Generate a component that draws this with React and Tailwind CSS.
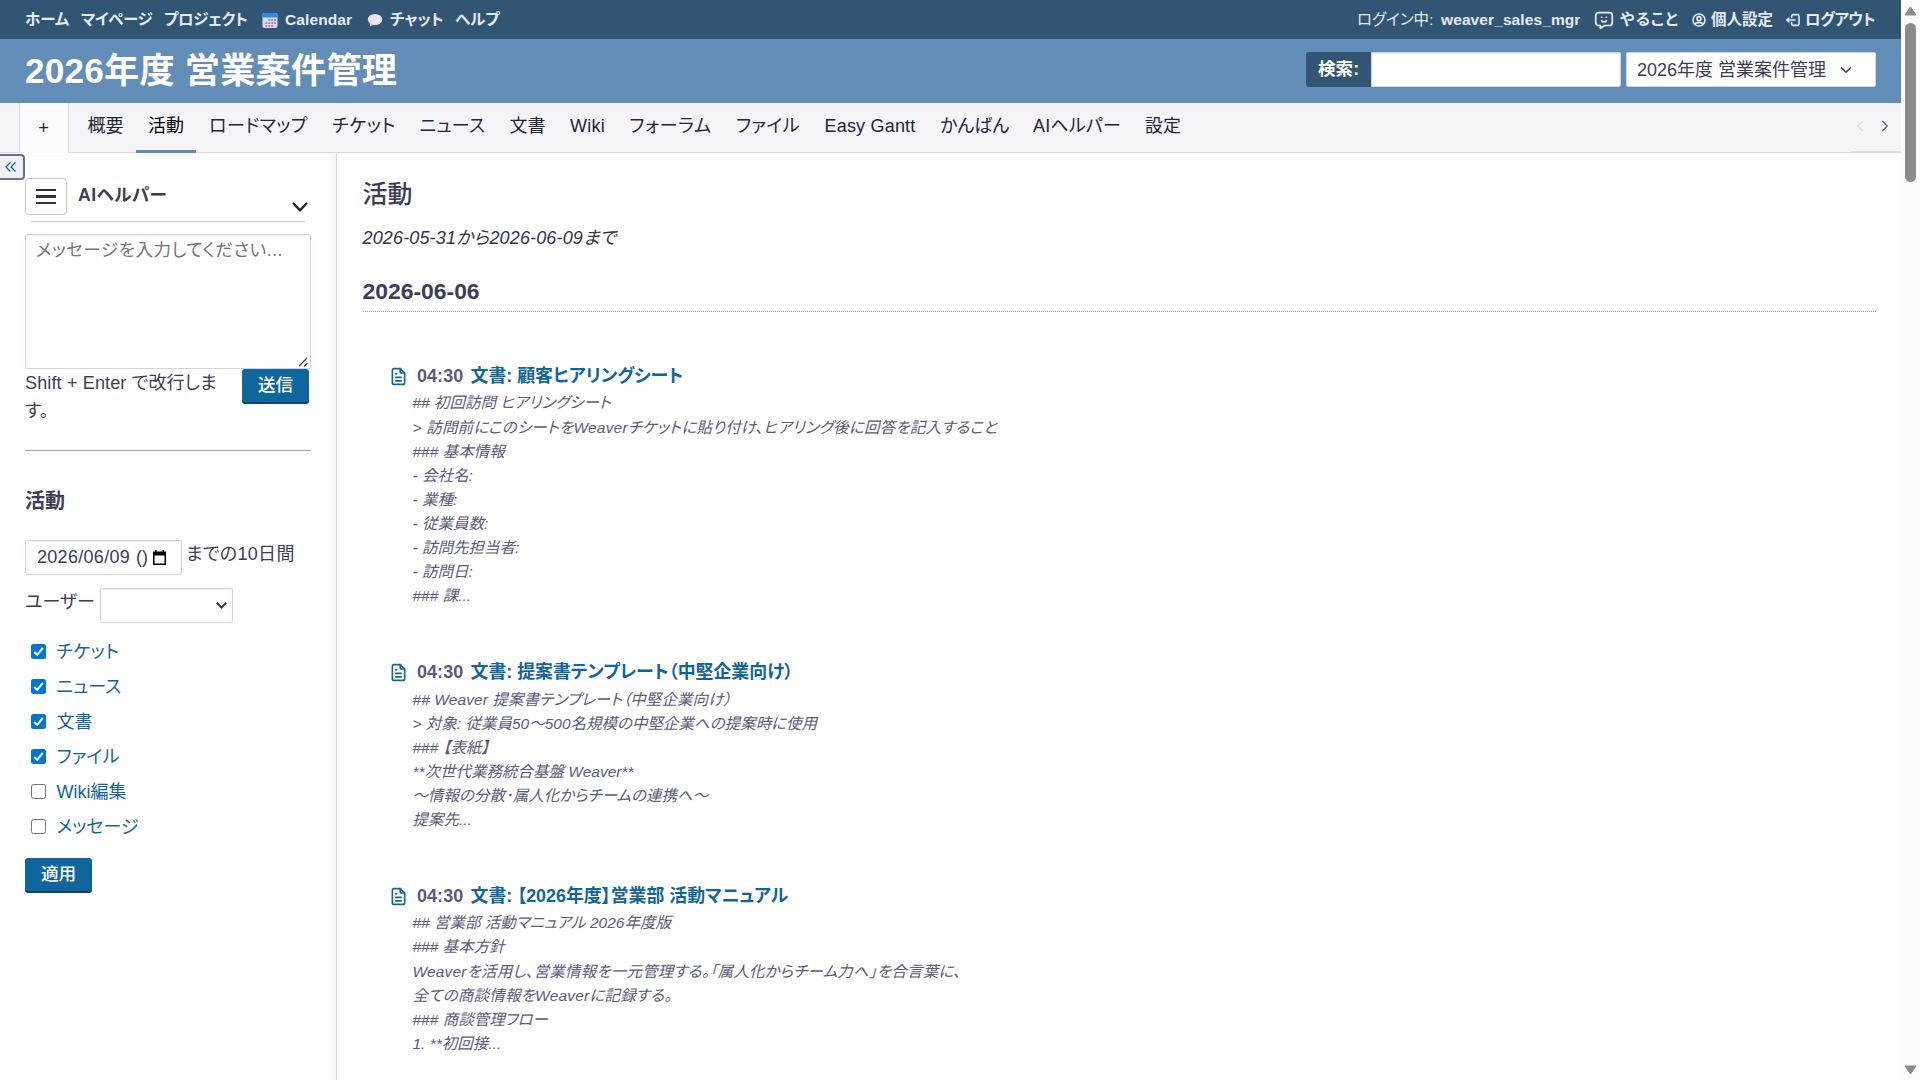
import {
  TbChevronDown,
  TbChevronLeft,
  TbChevronRight,
  TbChevronsLeft,
  TbFileText,
  TbLogout2,
  TbMessageChatbot,
  TbUserCircle,
} from "react-icons/tb";

const tabs = [
  { label: "概要", width: "w-[60px] pr-px" },
  { label: "活動", width: "w-[60px]", active: true },
  { label: "ロードマップ", width: "w-[124px] pl-px", tracking: "tracking-[0.4px]" },
  { label: "チケット", width: "w-[88px]", tracking: "tracking-[0.6px]" },
  { label: "ニュース", width: "w-[89px]", tracking: "tracking-[0.3px]" },
  { label: "文書", width: "w-[61px]" },
  { label: "Wiki", width: "w-[59px]", tracking: "tracking-[0.2px]" },
  { label: "フォーラム", width: "w-[107px]", tracking: "tracking-[0.7px]" },
  { label: "ファイル", width: "w-[88px]", tracking: "tracking-[0.4px]" },
  { label: "Easy Gantt", width: "w-[116px]", tracking: "tracking-[0.2px]" },
  { label: "かんばん", width: "w-[93px]" },
  { label: "AIヘルパー", width: "w-[112px]", tracking: "tracking-[0.2px]" },
  { label: "設定", width: "w-[60px]" },
];

const filters = [
  { label: "チケット", checked: true, tracking: "tracking-[0.4px]" },
  { label: "ニュース", checked: true, tracking: "tracking-normal" },
  { label: "文書", checked: true, tracking: "tracking-normal" },
  { label: "ファイル", checked: true, tracking: "tracking-[0.2px]" },
  { label: "Wiki編集", checked: false, tracking: "tracking-normal" },
  { label: "メッセージ", checked: false, tracking: "tracking-normal" },
];

const activities = [
  {
    time: "04:30",
    title: "文書: 顧客ヒアリングシート",
    lines: [
      { text: "## 初回訪問 ヒアリングシート" },
      {
        text: "> 訪問前にこのシートをWeaverチケットに貼り付け、ヒアリング後に回答を記入すること",
        className: "pt-px tracking-[0.19px]",
      },
      { text: "### 基本情報" },
      { text: "- 会社名:" },
      { text: "- 業種:" },
      { text: "- 従業員数:" },
      { text: "- 訪問先担当者:" },
      { text: "- 訪問日:" },
      { text: "### 課..." },
    ],
  },
  {
    time: "04:30",
    title: "文書: 提案書テンプレート（中堅企業向け）",
    lines: [
      { text: "## Weaver 提案書テンプレート（中堅企業向け）", className: "pt-px tracking-[0.1px]" },
      { text: "> 対象: 従業員50～500名規模の中堅企業への提案時に使用" },
      { text: "### 【表紙】" },
      { text: "**次世代業務統合基盤 Weaver**" },
      { text: "～情報の分散･属人化からチームの連携へ～" },
      { text: "提案先..." },
    ],
  },
  {
    time: "04:30",
    title: "文書: 【2026年度】営業部 活動マニュアル",
    lines: [
      { text: "## 営業部 活動マニュアル 2026年度版" },
      { text: "### 基本方針" },
      {
        text: "Weaverを活用し、営業情報を一元管理する。「属人化からチーム力へ」を合言葉に、",
        className: "pt-px tracking-[0.17px]",
      },
      {
        text: "全ての商談情報をWeaverに記録する。",
        className: "tracking-[0.2px]",
      },
      { text: "### 商談管理フロー" },
      { text: "1. **初回接..." },
    ],
  },
];

function CalendarIcon() {
  return (
    <svg width="16" height="16" viewBox="0 0 16 16">
      <rect x="0.5" y="1" width="15" height="15" rx="2" fill="#e3d9ee" />
      <path d="M0.5 5.5V3a2 2 0 0 1 2-2h11a2 2 0 0 1 2 2v2.500z" fill="#2f86f0" />
      <g fill="#9a8fb4">
        <rect x="6.300" y="7" width="2" height="2" />
        <rect x="9.200" y="7" width="2" height="2" />
        <rect x="12" y="7" width="2" height="2" />
        <rect x="3.300" y="10" width="2" height="2" />
        <rect x="6.300" y="10" width="2" height="2" />
        <rect x="9.200" y="10" width="2" height="2" />
        <rect x="12" y="10" width="2" height="2" />
        <rect x="3.300" y="13" width="2" height="2" />
        <rect x="6.300" y="13" width="2" height="2" />
        <rect x="9.200" y="13" width="2" height="2" />
      </g>
    </svg>
  );
}

function BubbleIcon() {
  return (
    <svg width="16" height="16" viewBox="0 0 16 16">
      <ellipse cx="8" cy="7.500" rx="7.200" ry="5.500" fill="#ece4f4" />
      <path d="M3 10.500L2.800 14.500L7.500 12.500z" fill="#d6c8e6" />
    </svg>
  );
}

function TopBar() {
  return (
    <div className="flex h-[39px] shrink-0 items-center justify-between bg-[#325574] pr-[25px] pl-[25px] text-[15.5px] font-semibold text-[#e3ecf5]">
      <div className="flex items-center">
        <span className="w-[56px]">ホーム</span>
        <span className="w-[83px] tracking-[-0.4px]">マイページ</span>
        <span className="w-[98px] tracking-[-0.4px]">プロジェクト</span>
        <span className="flex w-[105px] items-center gap-[7px] tracking-[0.1px]">
          <CalendarIcon />
          Calendar
        </span>
        <span className="flex w-[88px] items-center gap-[7px]">
          <BubbleIcon />
          チャット
        </span>
        <span>ヘルプ</span>
      </div>
      <div className="flex items-center">
        <span className="w-[84px] font-normal">ログイン中:</span>
        <span className="w-[152px] font-bold tracking-[0.1px]">weaver_sales_mgr</span>
        <span className="flex w-[98px] items-center gap-[5px]">
          <TbMessageChatbot size={22} strokeWidth={1.9} />
          <span className="tracking-[1px]">やること</span>
        </span>
        <span className="flex w-[94px] items-center gap-[4px]">
          <TbUserCircle size={16} strokeWidth={2.4} />
          個人設定
        </span>
        <span className="flex w-[91px] items-center gap-[4px]">
          <TbLogout2 size={16} strokeWidth={2.4} />
          <span className="tracking-[-0.5px]">ログアウト</span>
        </span>
      </div>
    </div>
  );
}

function Header() {
  return (
    <div className="flex h-16 shrink-0 items-center justify-between bg-[#628db6] px-[25px]">
      <h1 className="pb-px text-[35.2px] leading-none font-bold tracking-[0.2px] text-white">
        2026年度 営業案件管理
      </h1>
      <div className="mb-[3px] flex h-[35px]">
        <label className="flex w-[65px] items-center justify-center rounded-l-[3px] bg-[#325574] pb-px text-[17.600px] font-semibold text-white">
          検索:
        </label>
        <div className="w-[250px] rounded-r-[2px] border border-[#d3d2e6] bg-white shadow-[inset_0_1px_2px_#e4e4ee]" />
        <div className="ml-[5px] flex w-[250px] items-center rounded-[2px] border border-[#d3d2e6] bg-white pt-px pl-2.5 text-[18px] text-[#3d3d57]">
          2026年度 営業案件管理
          <TbChevronDown size={18} className="ml-[11px]" />
        </div>
      </div>
    </div>
  );
}

function TabBar() {
  return (
    <div className="flex h-[50px] shrink-0 border-b border-[#d9d9e8] bg-[#f5f5f8] text-[18px] text-[#24243a]">
      <div className="ml-[19px] flex h-[50px] w-[50px] items-center justify-center border-x border-[#d9d9e8] bg-[#fafbfd] pr-px">
        +
      </div>
      <div className="ml-[7px] flex">
        {tabs.map((tab) => (
          <div
            key={tab.label}
            className={`flex h-[50px] shrink-0 items-center justify-center border-b-[3px] whitespace-nowrap ${tab.width} ${tab.tracking || ""} ${
              tab.active ? "border-[#628db6] text-black" : "border-transparent"
            }`}
          >
            {tab.label}
          </div>
        ))}
      </div>
      <div className="ml-auto flex h-[50px] w-[50px] items-center justify-between border-b-2 border-[#d9dde8] pr-[7px] pb-0.5">
        <TbChevronLeft size={18} className="text-[#dcdce6]" />
        <TbChevronRight size={18} className="text-[#6a6a80]" />
      </div>
    </div>
  );
}

function CheckMark() {
  return (
    <svg width="15" height="15" viewBox="0 0 15 15">
      <path d="M3.200 8L6.200 10.800L11.800 4" fill="none" stroke="#fff" strokeWidth="2" />
    </svg>
  );
}

function Button({ children }) {
  return (
    <div className="flex h-[35px] w-[67px] shrink-0 items-center justify-center rounded-[3px] border-b-2 border-[#0b4568] bg-[#10669c] pb-px text-[17.600px] font-medium text-white">
      {children}
    </div>
  );
}

function Sidebar() {
  return (
    <div className="relative flex w-[337px] shrink-0 flex-col border-r border-[#d9d9e8] bg-linear-to-l from-[#f5f5f7] to-white to-[9px] pr-[25px] pl-[25px] text-[18px] text-[#3d3d57]">
      <div className="absolute top-px left-0 flex h-[26px] w-[25px] items-center justify-center rounded-r-[4px] border-2 border-l-0 border-[#6d6d92] bg-[#eff1f5] pr-px text-[#10669c]">
        <TbChevronsLeft size={20} strokeWidth={1.6} className="shrink-0" />
      </div>

      <div className="mt-[25px] flex h-[37px]">
        <div className="flex w-[42px] flex-col items-center justify-center gap-[4px] rounded-[4px] border border-[#c8c8c8]">
          <div className="h-[2.500px] w-5 bg-[#333]" />
          <div className="h-[2.500px] w-5 bg-[#333]" />
          <div className="h-[2.500px] w-5 bg-[#333]" />
        </div>
        <span className="ml-[11px] text-[17.600px] leading-[34px] font-bold tracking-[0.5px]">
          AIヘルパー
        </span>
        <svg width="16" height="10" viewBox="0 0 16 10" className="mt-[24px] mr-[3px] ml-auto">
          <path d="M1 1L8 8.300L15 1" fill="none" stroke="#222" strokeWidth="2.200" />
        </svg>
      </div>
      <div className="mx-[6px] mt-[6px] h-px bg-[#c8c8c8]" />

      <div className="relative mt-[12px] h-[135px] rounded-[2px] border border-[#d3d2e6] px-[10px] text-[17.600px] leading-[30px] tracking-[0.5px] whitespace-nowrap text-[#757575] shadow-[inset_0_1px_2px_#ececf2]">
        メッセージを入力してください...
        <svg width="10" height="10" viewBox="0 0 10 10" className="absolute right-[2px] bottom-px">
          <path d="M1 9L9 1M6 9.500L9.500 6" stroke="#444" strokeWidth="1.300" />
        </svg>
      </div>
      <div className="flex justify-between pr-[2px]">
        <p className="leading-[28px] tracking-[0.15px] whitespace-nowrap">
          Shift + Enter で改行しま
          <br />
          す。
        </p>
        <Button>送信</Button>
      </div>
      <div className="mt-[25px] h-px bg-[#a3a3bb]" />

      <h3 className="mt-[35px] text-[20px] leading-[30px] font-semibold">活動</h3>

      <div className="mt-[24px] flex h-[35px]">
        <div className="flex w-[157px] items-center rounded-[2px] border border-[#d3d2e6] pl-[11px] shadow-[inset_0_1px_2px_#ececf2]">
          <span className="tracking-[0.3px]">2026/06/09</span>
          <span className="ml-[6px]">()</span>
          <svg width="13" height="15" viewBox="0 0 13 15" className="ml-[5px]">
            <path d="M0.750 3h11.500v11.200H0.750z" fill="none" stroke="#000" strokeWidth="1.500" />
            <path d="M0 1.500h13v4H0zM2 0h1.500v2H2zM9.500 0H11v2H9.500z" fill="#000" />
          </svg>
        </div>
        <span className="ml-[4px] leading-[28px] tracking-[0.3px]">までの10日間</span>
      </div>

      <div className="mt-[13px] flex h-[35px]">
        <span className="w-[75px] leading-[28px] whitespace-nowrap">ユーザー</span>
        <div className="flex w-[133px] items-center justify-end rounded-[2px] border border-[#d3d2e6] pr-[5px] shadow-[inset_0_1px_2px_#ececf2]">
          <svg width="11" height="7" viewBox="0 0 11 7">
            <path d="M0.800 0.800L5.500 5.500L10.200 0.800" fill="none" stroke="#33334a" strokeWidth="2" />
          </svg>
        </div>
      </div>

      <div className="mt-[11px]">
        {filters.map((filter) => (
          <div key={filter.label} className="flex h-[35px] items-center pl-[6px]">
            <div
              className={`h-[15px] w-[15px] rounded-[2.500px] ${
                filter.checked ? "bg-[#0075d8]" : "border border-[#767676] bg-white"
              }`}
            >
              {filter.checked && <CheckMark />}
            </div>
            <span className={`ml-[10.500px] pt-px text-[#10669c] ${filter.tracking}`}>
              {filter.label}
            </span>
          </div>
        ))}
      </div>
      <div className="mt-[14px]">
        <Button>適用</Button>
      </div>
    </div>
  );
}

function Activity({ item }) {
  return (
    <div className="mb-[49px] pl-[26.500px]">
      <div className="flex h-[30px] items-center text-[17.900px] font-semibold whitespace-nowrap">
        <TbFileText size={21} strokeWidth={1.9} className="-ml-px text-[#10669c]" />
        <span className="ml-[8px] w-[53.500px] font-bold tracking-[0.1px] text-[#5b5b7b]">
          {item.time}
        </span>
        <span className="text-[#10669c]">{item.title}</span>
      </div>
      <div className="pl-[23.500px] text-[15.500px] text-[#5b5b7b] italic">
        {item.lines.map((line) => (
          <div key={line.text} className={`leading-6 whitespace-nowrap ${line.className || ""}`}>
            {line.text}
          </div>
        ))}
      </div>
    </div>
  );
}

function Content() {
  return (
    <div className="min-w-0 flex-1 pr-[25px] pl-[25.500px] text-[#3d3d57]">
      <h2 className="mt-[23px] text-[25px] leading-[36px] font-medium">活動</h2>
      <p className="mt-[13px] text-[18px] leading-[27px] tracking-[0.15px] text-[#33334c] italic">
        2026-05-31から2026-06-09まで
      </p>
      <h3 className="mt-[23px] h-[37px] border-b border-dotted border-[#9a9ab0] text-[22.900px] leading-[32px] font-bold">
        2026-06-06
      </h3>
      <div className="mt-[49px]">
        {activities.map((item) => (
          <Activity key={item.title} item={item} />
        ))}
      </div>
    </div>
  );
}

function Scrollbar() {
  return (
    <div className="flex w-[19px] flex-col items-center bg-[#fcfcfc] pt-[6px] pr-px pb-[5px]">
      <svg width="13" height="10" viewBox="0 0 13 10">
        <path d="M6.500 1L12 9H1z" fill="#8b8b8b" stroke="#8b8b8b" strokeLinejoin="round" />
      </svg>
      <div className="mt-[7px] h-[159px] w-[11px] rounded-full bg-[#8b8b8b]" />
      <svg width="13" height="10" viewBox="0 0 13 10" className="mt-auto">
        <path d="M6.500 9L12 1H1z" fill="#8b8b8b" stroke="#8b8b8b" strokeLinejoin="round" />
      </svg>
    </div>
  );
}

export default function App() {
  return (
    <div className="flex h-[1080px] w-[1920px] overflow-hidden bg-white font-['Liberation_Sans','Noto_Sans_CJK_JP',sans-serif] [font-feature-settings:'palt']">
      <div className="flex w-[1901px] flex-col overflow-hidden">
        <TopBar />
        <Header />
        <TabBar />
        <div className="flex min-h-0 flex-1">
          <Sidebar />
          <Content />
        </div>
      </div>
      <Scrollbar />
    </div>
  );
}
